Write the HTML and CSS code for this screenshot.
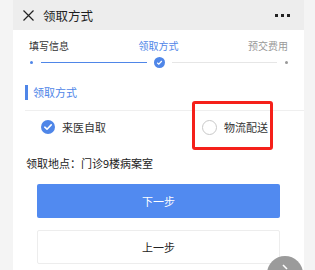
FILE: index.html
```html
<!DOCTYPE html>
<html lang="zh">
<head>
<meta charset="utf-8">
<link rel="stylesheet" href="styles.css">
</head>
<body>
<div class="phone">
  <div class="header">
    <svg class="close" width="11" height="11" viewBox="0 0 11 11"><path d="M0.5 0.5L10.5 10.5M10.5 0.5L0.5 10.5" stroke="#222" stroke-width="1.2" fill="none"/></svg>
    <span class="title">领取方式</span>
    <span class="more"><i></i><i></i><i></i></span>
  </div>
  <div class="steps">
    <div class="labels">
      <span class="done">填写信息</span>
      <span class="active">领取方式</span>
      <span class="todo">预交费用</span>
    </div>
    <div class="track">
      <span class="dot blue"></span>
      <span class="line blue"></span>
      <svg class="cur" width="11" height="11" viewBox="0 0 11 11"><circle cx="5.5" cy="5.5" r="5.5" fill="#4f86e8"/><path d="M3.2 5.8L4.8 7.2L7.8 4" stroke="#fff" stroke-width="1.2" fill="none"/></svg>
      <span class="line gray"></span>
      <span class="dot gray"></span>
    </div>
  </div>
  <div class="section-title"><span class="bar"></span>领取方式</div>
  <div class="options">
    <div class="opt opt-left">
      <svg width="14" height="14" viewBox="0 0 14 14"><circle cx="7" cy="7" r="7" fill="#4f86e8"/><path d="M3.8 7.2L6 9.2L10.2 4.9" stroke="#fff" stroke-width="1.6" fill="none" stroke-linecap="round" stroke-linejoin="round"/></svg>
      <span>来医自取</span>
    </div>
    <div class="opt opt-right">
      <svg width="15" height="15" viewBox="0 0 15 15"><circle cx="7.5" cy="7.5" r="7" fill="#fff" stroke="#c8c8c8" stroke-width="1"/></svg>
      <span>物流配送</span>
    </div>
    <div class="highlight"></div>
  </div>
  <div class="location">领取地点：门诊9楼病案室</div>
  <div class="buttons">
    <div class="btn primary">下一步</div>
    <div class="btn secondary">上一步</div>
  </div>
</div>
<div class="fab"><svg width="36" height="14" viewBox="0 0 36 14"><circle cx="18" cy="18" r="18" fill="#9b9b9b"/><path d="M16 9L20 13" stroke="#fff" stroke-width="1.6" fill="none"/></svg></div>
</body>
</html>
```
FILE: styles.css
```css
html, body {
  margin: 0;
  padding: 0;
  background: #f4f4f4;
  font-family: "Noto Sans CJK SC", "Noto Sans", sans-serif;
}
body { position: relative; height: 270px; }
.phone {
  position: relative;
  margin-left: 13px;
  width: 291px;
  height: 270px;
  background: #fff;
  overflow: hidden;
}
.header {
  height: 30px;
  background: #ededed;
  display: flex;
  align-items: center;
  padding: 0 14px 0 10px;
}
.close { flex: none; }
.title {
  margin-left: 9px;
  font-size: 12.5px;
  color: #1f1f1f;
  flex: 1;
}
.more { display: flex; gap: 3px; }
.more i {
  display: block;
  width: 3px;
  height: 3px;
  background: #222;
}
.steps {
  padding: 9px 16px 0 16px;
}
.labels {
  display: flex;
  justify-content: space-between;
  font-size: 10px;
  line-height: 14px;
}
.labels .done { color: #333; }
.labels .active { color: #4f86e8; }
.labels .todo { color: #999; }
.track {
  display: flex;
  align-items: center;
  margin-top: 4px;
  height: 11px;
}
.dot {
  width: 3px;
  height: 3px;
  border-radius: 50%;
  flex: none;
}
.dot.blue { background: #4f86e8; margin-left: 1px; }
.dot.gray { background: #999; }
.line { height: 1px; flex: 1; }
.line.blue { background: #4f86e8; margin: 0 7px 0 8px; }
.line.gray { background: #e6e6e6; margin: 0 8px 0 7px; }
.cur { flex: none; }
.section-title {
  margin: 16px 0 0 12px;
  height: 16px;
  display: flex;
  align-items: center;
  font-size: 11px;
  color: #4f86e8;
  padding-bottom: 10px;
  border-bottom: 1px solid #efefef;
}
.bar {
  width: 3px;
  height: 15px;
  background: #4f86e8;
  margin-right: 5px;
}
.options {
  position: relative;
  height: 32px;
  display: flex;
  align-items: center;
}
.opt {
  display: flex;
  align-items: center;
  gap: 7px;
  font-size: 11px;
  color: #333;
}
.opt-left { margin-left: 28px; }
.opt-right { margin-left: 96px; }
.highlight {
  position: absolute;
  left: 179px;
  top: -10px;
  width: 75px;
  height: 43px;
  border: 3px solid #f5201a;
  border-radius: 3px;
}
.location {
  margin: 12px 0 0 13px;
  font-size: 11px;
  line-height: 16px;
  color: #222;
}
.buttons {
  margin: 13px 24px 0 24px;
  display: flex;
  flex-direction: column;
  gap: 12px;
}
.btn {
  height: 34px;
  display: flex;
  align-items: center;
  justify-content: center;
  font-size: 11px;
  border-radius: 2px;
  box-sizing: border-box;
}
.primary { background: #518af0; color: #fff; }
.secondary { background: #fff; color: #222; border: 1px solid #ededed; }
.fab {
  position: absolute;
  left: 267px;
  top: 256px;
  width: 36px;
  height: 14px;
}
.fab svg { display: block; }
```
